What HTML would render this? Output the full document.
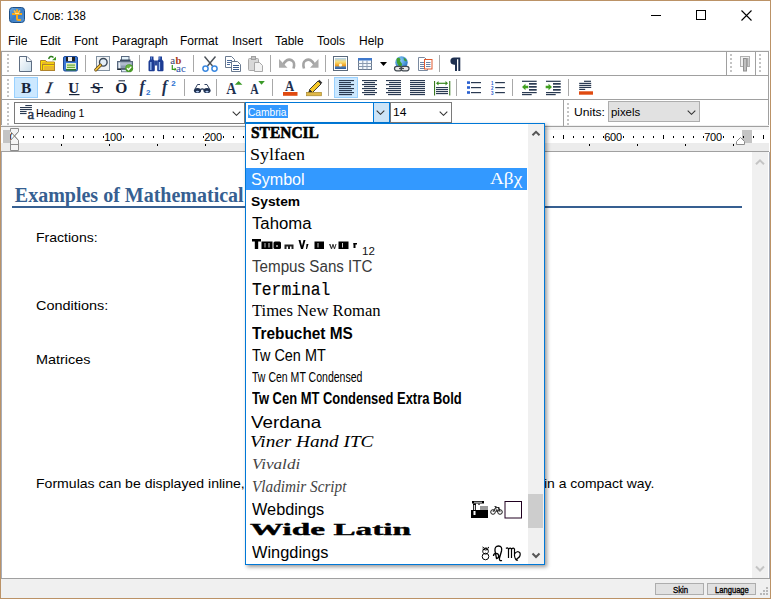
<!DOCTYPE html>
<html><head><meta charset="utf-8">
<style>
*{margin:0;padding:0;box-sizing:border-box}
html,body{width:771px;height:599px;overflow:hidden;background:#fff}
body{position:relative;font-family:"Liberation Sans",sans-serif;font-size:12px;color:#000}
.a{position:absolute}
#frame{left:0;top:0;width:771px;height:599px;border:1px solid #bb9266;z-index:50;pointer-events:none}
.menu span{position:absolute;top:34px;font-size:12px;white-space:nowrap}
.grip{position:absolute;width:2px;background-image:linear-gradient(#c4c4c4 50%,transparent 50%);background-size:2px 4px}
.sep{position:absolute;width:1px;height:17px;background:#a8a8a8}
.ic{position:absolute;width:16px;height:16px}
.li{position:absolute;left:251px;white-space:nowrap;line-height:1;transform-origin:0 0}
.doc{position:absolute;left:36px;font-size:13px;line-height:1;white-space:nowrap;color:#000;transform-origin:0 0}
.tick{position:absolute;width:1px;background:#000}
.rn{position:absolute;top:132px;width:40px;text-align:center;font-size:11px;line-height:1;white-space:nowrap;letter-spacing:-0.3px}
</style></head><body>
<div id="frame" class="a"></div>

<!-- title bar -->
<svg class="a" style="left:9px;top:7px" width="16" height="16" viewBox="0 0 16 16">
<defs><linearGradient id="gApp" x1="0" y1="0" x2="1" y2="1"><stop offset="0" stop-color="#6aa8e0"/><stop offset="0.5" stop-color="#3a7cc4"/><stop offset="1" stop-color="#5a9ad8"/></linearGradient></defs>
<rect x="0.5" y="0.5" width="15" height="15" rx="3" fill="url(#gApp)" stroke="#1d4f86"/>
<path d="M3 7H13" stroke="#f8a818" stroke-width="2"/>
<path d="M8 2.3V11.8Q8 13 9.5 13H12" fill="none" stroke="#f8a818" stroke-width="2"/>
<path d="M5 3.5L6.8 6M11 3.5L9.2 6" stroke="#ffc040" stroke-width="1.6"/>
<path d="M6 6.5L10 6.5" stroke="#ffe08a" stroke-width="1"/>
</svg>
<div class="a" style="left:33.3px;top:10px;font-size:12px;line-height:1;transform:scaleX(0.95);transform-origin:0 0;white-space:nowrap">Слов: 138</div>
<div class="a" style="left:651px;top:15px;width:10px;height:1px;background:#000"></div>
<div class="a" style="left:696px;top:10px;width:10px;height:10px;border:1px solid #000"></div>
<svg class="a" style="left:741px;top:10px" width="11" height="11"><path d="M0.5 0.5L10.5 10.5M10.5 0.5L0.5 10.5" stroke="#000" stroke-width="1.1"/></svg>

<!-- menu -->
<div class="menu">
<span style="left:8px">File</span>
<span style="left:40px">Edit</span>
<span style="left:74px">Font</span>
<span style="left:112px">Paragraph</span>
<span style="left:180px">Format</span>
<span style="left:232px">Insert</span>
<span style="left:275px">Table</span>
<span style="left:317px">Tools</span>
<span style="left:359px">Help</span>
</div>

<!-- toolbar area -->
<div class="a" style="left:1px;top:50px;width:769px;height:1px;background:#f0f0f0"></div>
<div class="a" style="left:1px;top:51px;width:768px;height:76px;border:1px solid #a0a0a0;border-bottom:none"></div>
<div class="a" style="left:1px;top:75px;width:768px;height:1px;background:#a0a0a0"></div>
<div class="a" style="left:1px;top:99px;width:768px;height:1px;background:#a0a0a0"></div>
<div class="a" style="left:1px;top:125px;width:768px;height:1px;background:#f0f0f0"></div><div class="a" style="left:1px;top:126px;width:768px;height:1px;background:#a0a0a0"></div>
<div class="a" style="left:726px;top:52px;width:1px;height:23px;background:#a0a0a0"></div>
<div class="a" style="left:755px;top:52px;width:1px;height:23px;background:#a0a0a0"></div>
<div class="a" style="left:563px;top:100px;width:1px;height:26px;background:#a0a0a0"></div>
<div class="grip" style="left:7px;top:54px;height:18px"></div>
<div class="grip" style="left:7px;top:79px;height:18px"></div>
<div class="grip" style="left:7px;top:103px;height:22px"></div>
<div class="grip" style="left:730px;top:54px;height:18px"></div>
<div class="grip" style="left:759px;top:54px;height:18px"></div>
<div class="grip" style="left:567px;top:103px;height:22px"></div>

<!-- toolbar 1 separators -->
<div class="sep" style="left:85px;top:55px"></div>
<div class="sep" style="left:139px;top:55px"></div>
<div class="sep" style="left:193px;top:55px"></div>
<div class="sep" style="left:270px;top:55px"></div>
<div class="sep" style="left:325px;top:55px"></div>
<div class="sep" style="left:439px;top:55px"></div>
<!-- toolbar 2 separators -->
<div class="sep" style="left:184px;top:79px"></div>
<div class="sep" style="left:216px;top:79px"></div>
<div class="sep" style="left:272px;top:79px"></div>
<div class="sep" style="left:328px;top:79px"></div>
<div class="sep" style="left:456px;top:79px"></div>
<div class="sep" style="left:512px;top:79px"></div>
<div class="sep" style="left:568px;top:79px"></div>

<svg class="a" style="left:0;top:0" width="771" height="126" viewBox="0 0 771 126">
<defs>
<linearGradient id="gNew" x1="0" y1="0" x2="1" y2="1"><stop offset="0" stop-color="#ffffff"/><stop offset="1" stop-color="#c8dcea"/></linearGradient>
<linearGradient id="gImg" x1="0" y1="0" x2="0" y2="1"><stop offset="0" stop-color="#b0d0f0"/><stop offset="0.35" stop-color="#f8e078"/><stop offset="0.72" stop-color="#f09818"/><stop offset="0.8" stop-color="#5080b8"/><stop offset="1" stop-color="#2a5898"/></linearGradient>
<radialGradient id="gGlobe" cx="0.4" cy="0.35" r="0.7"><stop offset="0" stop-color="#8fd0ff"/><stop offset="1" stop-color="#1f70c0"/></radialGradient>
<linearGradient id="gFold" x1="0" y1="0" x2="0" y2="1"><stop offset="0" stop-color="#ffe066"/><stop offset="1" stop-color="#e8b020"/></linearGradient>
</defs>
<!-- New -->
<path d="M19.5 56.5H27L31.5 61V71.5H19.5Z" fill="url(#gNew)" stroke="#5d6d82"/>
<path d="M26.5 56.5V61.5H31.5" fill="#fff" stroke="#5d6d82"/>
<!-- Open -->
<path d="M40.5 60.5H45.5L47 62H54.5V70.5H40.5Z" fill="#e8b828" stroke="#b0842c"/>
<path d="M41.5 61.5V69.5M41.5 61.5H45M46.5 63H54" fill="none" stroke="#ffe200" stroke-width="1"/>
<rect x="42.5" y="64.5" width="12" height="6" fill="#e8b830" stroke="#b0842c"/>
<path d="M43.5 70V65.5H54" fill="none" stroke="#ffe000" stroke-width="1"/>
<path d="M48.6 58.8Q50.5 55 53.5 57.5" fill="none" stroke="#2a7a1a" stroke-width="1.5"/>
<path d="M52 60.3H56V56.8Z" fill="#3a9a20"/>
<!-- Save -->
<rect x="63.5" y="56.5" width="14" height="14.5" rx="1.5" fill="#3d7ad8" stroke="#1c4a98"/>
<rect x="66" y="57" width="9" height="4.5" fill="#202020"/>
<rect x="68" y="57" width="4" height="4" fill="#f0f0f0"/>
<rect x="66" y="63" width="10" height="7" fill="#e4f2cc"/>
<rect x="67" y="64.5" width="8" height="1.2" fill="#6aac38"/>
<rect x="67" y="66.8" width="8" height="1.2" fill="#6aac38"/>
<rect x="66" y="69" width="10" height="1.5" fill="#2f7a20"/>
<!-- sep -->
<!-- Preview -->
<rect x="96.5" y="56.5" width="13" height="14" fill="#f0f2f4" stroke="#8090a0"/>
<circle cx="103.3" cy="62.3" r="3.8" fill="#e4eef6" stroke="#3a4858" stroke-width="1.4"/>
<path d="M100.5 65.2L95.8 69.8" stroke="#5a4010" stroke-width="3.2" stroke-linecap="round"/>
<path d="M100.5 65.2L95.8 69.8" stroke="#f4c440" stroke-width="1.7" stroke-linecap="round"/>
<!-- Print -->
<rect x="121.5" y="56.5" width="7.5" height="5" fill="#e4f2fa" stroke="#5a6a80"/>
<rect x="120" y="59.5" width="10.5" height="2" fill="#3a4a60"/>
<rect x="117.5" y="61.5" width="15" height="8" fill="#8a9ab0" stroke="#5a6a80"/>
<rect x="118.5" y="62.5" width="2" height="6" fill="#e8eef4"/>
<rect x="120.5" y="62.5" width="11" height="3" fill="#b0bccc"/>
<rect x="117.5" y="68.5" width="9" height="1.5" fill="#202830"/>
<rect x="121.5" y="69.5" width="9" height="2.3" fill="#e4f2fa" stroke="#5a6a80" stroke-width="0.8"/>
<circle cx="129.2" cy="68.2" r="3.9" fill="#4a9a28"/>
<circle cx="128.6" cy="67.4" r="2.4" fill="#6ab840"/>
<path d="M127 68.2L128.6 69.8L131.4 66.6" fill="none" stroke="#fff" stroke-width="1.3"/>
<!-- Binoculars -->
<path d="M150 56.5H153.5V59.5L154.8 61V70.3Q154.8 71.3 153.8 71.3H149.5Q148.5 71.3 148.5 70.3V61.5L150 59.5Z" fill="#1c3c94"/>
<path d="M158.5 56.5H162V59.5L163.5 61.5V70.3Q163.5 71.3 162.5 71.3H158.2Q157.2 71.3 157.2 70.3V61L158.5 59.5Z" fill="#1c3c94"/>
<rect x="154.5" y="60.5" width="3" height="5" fill="#2a4a9a"/>
<rect x="150.2" y="62" width="1.3" height="8" fill="#9ac0f4"/>
<rect x="158.8" y="62" width="1.3" height="8" fill="#9ac0f4"/>
<rect x="150.8" y="57" width="1" height="2.5" fill="#6a98e0"/>
<rect x="159.3" y="57" width="1" height="2.5" fill="#6a98e0"/>
<!-- Replace -->
<text x="170.3" y="63.5" font-family="Liberation Serif" font-size="11" fill="#3a4470">a</text>
<text x="175.6" y="63.5" font-family="Liberation Serif" font-size="10.5" font-weight="bold" fill="#a83818">b</text>
<text x="176" y="71.5" font-family="Liberation Serif" font-size="11" fill="#2850a8">ac</text>
<path d="M172.3 65V69.3H175.5" fill="none" stroke="#3a9a20" stroke-width="1.2"/>
<path d="M174.6 67.6L176.6 69.3L174.6 71Z" fill="#3a9a20"/>
<!-- Scissors -->
<path d="M204.5 56.5L212.5 66" stroke="#4a5058" stroke-width="1.4"/>
<path d="M215.5 56.5L207.5 66" stroke="#4a5058" stroke-width="1.4"/>
<circle cx="205.5" cy="68.6" r="2.6" fill="none" stroke="#3a88e0" stroke-width="1.5"/>
<circle cx="214.5" cy="68.6" r="2.6" fill="none" stroke="#3a88e0" stroke-width="1.5"/>
<!-- Copy -->
<path d="M225.5 56.5H231.5L234.5 59.5V67.5H225.5Z" fill="#fff" stroke="#6a7a90"/>
<path d="M227 60.5H232M227 62.5H232M227 64.5H230" stroke="#4a6a9a"/>
<path d="M231.5 61.5H237.5L240.5 64.5V71.5H231.5Z" fill="#fff" stroke="#6a7a90"/>
<path d="M233 65.5H239M233 67.5H239M233 69.5H239" stroke="#3a5a8a"/>
<!-- Paste (disabled) -->
<rect x="248.5" y="58.5" width="10" height="12" rx="1" fill="#d8d8d8" stroke="#a8a8a8"/>
<rect x="251.5" y="56.5" width="4" height="3" fill="#c4c4c4" stroke="#a0a0a0"/>
<path d="M254.5 62.5H259.5L262.5 65.5V71.5H254.5Z" fill="#f2f2f2" stroke="#a8a8a8"/>
<!-- Undo -->
<path d="M282.5 65.5Q286.5 57.5 292 60.5Q295.3 62.5 293.5 68.5" fill="none" stroke="#a4a4a4" stroke-width="2.6"/>
<path d="M279 59V67.8H287.5Z" fill="#acacac"/>
<!-- Redo -->
<path d="M315 65.5Q311 57.5 305.5 60.5Q302.2 62.5 304 68.5" fill="none" stroke="#a4a4a4" stroke-width="2.6"/>
<path d="M318.5 59V67.8H310Z" fill="#acacac"/>
<!-- Image -->
<rect x="333.5" y="56.5" width="14" height="14" fill="#fff" stroke="#5a6a7c"/>
<rect x="335" y="58" width="11" height="11" fill="url(#gImg)"/>
<circle cx="340.5" cy="65" r="1.6" fill="#fffce0"/>
<!-- Table -->
<rect x="358.5" y="58.5" width="13" height="11" fill="#f4f8fc" stroke="#6a7a90"/>
<rect x="358" y="58" width="14" height="2.5" fill="#3f78cc"/>
<path d="M362.8 60.5V69.5M367 60.5V69.5M358.5 63.5H371.5M358.5 66.5H371.5" stroke="#8a9ab0" stroke-width="1"/>
<!-- dropdown -->
<path d="M380 62H387L383.5 66Z" fill="#000"/>
<!-- Globe link -->
<circle cx="401.5" cy="62.5" r="6.2" fill="url(#gGlobe)"/>
<path d="M397 58Q399 57 400.5 59Q399.5 61 401 62.5Q403 64 401 67Q398 66 397 63Q396 60 397 58Z" fill="#40a030"/>
<path d="M403.5 57.5Q406 58.5 407 61Q405 62 404 60Z" fill="#40a030"/>
<rect x="394.5" y="66.3" width="7.5" height="4.5" rx="2.2" fill="#e8e8e8" stroke="#404850" stroke-width="1.2"/>
<rect x="401" y="66.3" width="8" height="4.5" rx="2.2" fill="#e8e8e8" stroke="#404850" stroke-width="1.2"/><path d="M399 68.5H404" stroke="#404850" stroke-width="1.2"/>
<!-- Page copy -->
<path d="M418.5 57.5H424.5L427.5 60.5V70.5H418.5Z" fill="#fff" stroke="#7a8aa0"/>
<path d="M420 62.5H425M420 64.5H425M420 66.5H425M420 68.5H425" stroke="#6a84a8"/>
<rect x="424.5" y="59.5" width="7.5" height="9.5" fill="#fff" stroke="#e05a30"/>
<path d="M426 62.5H430.5M426 64.5H430.5M426 66.5H430.5" stroke="#6a84a8"/>
<!-- Pilcrow -->
<path d="M460.3 57.5H454A3.6 3.6 0 0 0 454 64.7H455V71H457V59.3H458.3V71H460.3Z" fill="#1e3050"/>
<!-- right mini icon -->
<rect x="740.5" y="56.5" width="9" height="10" fill="#f0f0f0" stroke="#b0b0b0"/>
<rect x="743.5" y="58.5" width="3" height="12.5" fill="#c0c0c0" stroke="#909090"/>
<rect x="746.5" y="58" width="2" height="9" fill="#a8a8a8"/>
</svg>

<svg class="a" style="left:0;top:0" width="771" height="126" viewBox="0 0 771 126">
<!-- B highlight -->
<rect x="14.5" y="77.5" width="23" height="20" fill="#cce8ff" stroke="#99d1ff"/>
<text x="21" y="92.8" font-family="Liberation Serif" font-weight="bold" font-size="15.5" fill="#16233a">B</text>
<text x="45.5" y="92.8" font-family="Liberation Serif" font-style="italic" font-size="16" fill="#16233a" stroke="#16233a" stroke-width="0.3" transform="translate(45 92.8) skewX(-10) translate(-45 -92.8)">I</text>
<text x="68.3" y="92.8" font-family="Liberation Serif" font-weight="bold" font-size="15" fill="#16233a">U</text>
<rect x="69" y="94" width="10.5" height="1.2" fill="#16233a"/>
<text x="92" y="92.8" font-family="Liberation Serif" font-weight="bold" font-size="15" fill="#16233a">S</text>
<rect x="90.5" y="87" width="12.5" height="1.2" fill="#16233a"/>
<text x="115.2" y="93.2" font-family="Liberation Serif" font-weight="bold" font-size="15.5" fill="#16233a">O</text>
<rect x="118.5" y="80.3" width="6.5" height="1" fill="#16233a"/>
<!-- f2 -->
<text x="139.5" y="92" font-family="Liberation Serif" font-style="italic" font-weight="bold" font-size="16" fill="#1e3050">f</text>
<text x="146" y="94.7" font-family="Liberation Sans" font-weight="bold" font-size="8" fill="#2a70d0">2</text>
<text x="162" y="92" font-family="Liberation Serif" font-style="italic" font-weight="bold" font-size="16" fill="#1e3050">f</text>
<text x="171.2" y="86.3" font-family="Liberation Sans" font-weight="bold" font-size="8" fill="#2a70d0">2</text>
<!-- glasses -->
<path d="M195 89L197.5 84.5H200M209.5 89L207 84.5H204.5" fill="none" stroke="#1e3050" stroke-width="0.9"/>
<path d="M200.5 89.5Q202.3 88.3 204 89.5" fill="none" stroke="#1e3050" stroke-width="1.2"/>
<ellipse cx="197.5" cy="90.5" rx="3.6" ry="2.6" fill="#1e3050"/>
<ellipse cx="207" cy="90.5" rx="3.6" ry="2.6" fill="#1e3050"/>
<ellipse cx="197.5" cy="91.6" rx="1.6" ry="0.9" fill="#b0c8f0"/>
<ellipse cx="207" cy="91.6" rx="1.6" ry="0.9" fill="#b0c8f0"/>
<!-- A grow -->
<text font-family="Liberation Serif" font-weight="bold" font-size="17" fill="#1e3050" transform="translate(226.3 94.3) scale(0.82 1)">A</text>
<path d="M234.8 84.8L238.6 81L242.4 84.8Z" fill="#3a9a28"/>
<text font-family="Liberation Serif" font-weight="bold" font-size="14.5" fill="#1e3050" transform="translate(250.3 94.3) scale(0.8 1)">A</text>
<path d="M258.3 81H264.8L261.5 84.7Z" fill="#3a9a28"/>
<!-- A red -->
<text font-family="Liberation Serif" font-weight="bold" font-size="15" fill="#1e3050" transform="translate(285 90.8) scale(0.85 1)">A</text>
<rect x="283" y="92" width="14.5" height="3.8" fill="#e04a10"/>
<!-- highlighter -->
<path d="M309.5 89.5L318 81L321 84L312.5 92.5Z" fill="#f6c828" stroke="#2a2a2a" stroke-width="0.9"/>
<path d="M318 81L319.3 79.7L322.3 82.7L321 84Z" fill="#333"/>
<path d="M309.5 89.5L307.8 93.2L312.5 92.5Z" fill="#2a2a2a"/>
<rect x="306.5" y="92.3" width="15" height="3.5" fill="#e0b848" stroke="#a08028" stroke-width="0.6"/>
<!-- align left highlight -->
<rect x="334.5" y="77.5" width="23" height="20" fill="#cce8ff" stroke="#99d1ff"/>
<g fill="#2a3a52">
<rect x="339" y="80" width="15" height="1.15"/><rect x="339" y="82" width="12" height="1.15"/>
<rect x="339" y="84" width="15" height="1.15"/><rect x="339" y="86" width="12" height="1.15"/>
<rect x="339" y="88" width="15" height="1.15"/><rect x="339" y="90" width="13" height="1.15"/>
<rect x="339" y="92" width="15" height="1.15"/><rect x="339" y="94" width="13" height="1.15"/>
<!-- center -->
<rect x="362" y="80" width="15" height="1.15"/><rect x="364" y="82" width="11" height="1.15"/>
<rect x="362" y="84" width="15" height="1.15"/><rect x="364" y="86" width="11" height="1.15"/>
<rect x="362" y="88" width="15" height="1.15"/><rect x="364" y="90" width="11" height="1.15"/>
<rect x="362" y="92" width="15" height="1.15"/><rect x="364" y="94" width="11" height="1.15"/>
<!-- right -->
<rect x="386" y="80" width="15" height="1.15"/><rect x="389" y="82" width="12" height="1.15"/>
<rect x="386" y="84" width="15" height="1.15"/><rect x="389" y="86" width="12" height="1.15"/>
<rect x="386" y="88" width="15" height="1.15"/><rect x="388" y="90" width="13" height="1.15"/>
<rect x="386" y="92" width="15" height="1.15"/><rect x="388" y="94" width="13" height="1.15"/>
<!-- justify -->
<rect x="410" y="80" width="15" height="1.15"/><rect x="410" y="82" width="15" height="1.15"/>
<rect x="410" y="84" width="15" height="1.15"/><rect x="410" y="86" width="15" height="1.15"/>
<rect x="410" y="88" width="15" height="1.15"/><rect x="410" y="90" width="15" height="1.15"/>
<rect x="410" y="92" width="15" height="1.15"/><rect x="410" y="94" width="15" height="1.15"/>
<!-- distribute lines -->
<rect x="436" y="87" width="12" height="1.15"/><rect x="436" y="89" width="12" height="1.15"/>
<rect x="436" y="91" width="12" height="1.15"/><rect x="436" y="93" width="12" height="1.15"/>
</g>
<rect x="434" y="81" width="1.1" height="14.5" fill="#3a7a20"/>
<rect x="449.2" y="81" width="1.1" height="14.5" fill="#3a7a20"/>
<path d="M437 83.3H447" stroke="#3a8a20" stroke-width="1.2"/>
<path d="M436 83.3L438.5 81V85.6Z M448 83.3L445.5 81V85.6Z" fill="#3a8a20"/>
<!-- bullets -->
<g fill="#2a60d0"><rect x="467" y="81.3" width="3" height="2.6"/><rect x="467" y="86.2" width="3" height="2.6"/><rect x="467" y="91.2" width="3" height="2.6"/></g>
<g fill="#2a3a52"><rect x="471" y="82" width="10" height="1.2"/><rect x="471" y="87" width="10" height="1.2"/><rect x="471" y="92" width="10" height="1.2"/>
<rect x="495.2" y="82" width="9.7" height="1.2"/><rect x="495.2" y="87" width="9.7" height="1.2"/><rect x="495.2" y="92" width="9.7" height="1.2"/></g>
<text x="491" y="84.5" font-family="Liberation Sans" font-weight="bold" font-size="4.5" fill="#2a60d0">1</text>
<text x="491" y="89.5" font-family="Liberation Sans" font-weight="bold" font-size="4.5" fill="#2a60d0">2</text>
<text x="491" y="94.5" font-family="Liberation Sans" font-weight="bold" font-size="4.5" fill="#2a60d0">3</text>
<!-- outdent -->
<g fill="#2a3a52">
<rect x="522" y="80.7" width="14.7" height="1.2"/>
<rect x="529" y="83" width="7.7" height="1.7"/><rect x="529" y="86" width="7.7" height="1.7"/><rect x="529" y="89" width="7.7" height="1.7"/>
<rect x="522" y="92" width="14.7" height="1.2"/><rect x="522" y="94" width="9.7" height="1.2"/>
<rect x="546" y="80.7" width="14.7" height="1.2"/>
<rect x="553" y="83" width="7.7" height="1.7"/><rect x="553" y="86" width="7.7" height="1.7"/><rect x="553" y="89" width="7.7" height="1.7"/>
<rect x="546" y="92" width="14.7" height="1.2"/><rect x="546" y="94" width="9.7" height="1.2"/>
</g>
<path d="M522 87L525.5 83.8V85.8H528.3V88.2H525.5V90.2Z" fill="#40a020"/>
<path d="M552 87L548.5 83.8V85.8H545.7V88.2H548.5V90.2Z" fill="#40a020"/>
<!-- last -->
<g fill="#2a3a52">
<rect x="584" y="80.7" width="7" height="1.2"/><rect x="579.2" y="82.8" width="12" height="1.2"/>
<rect x="579.2" y="84.8" width="12" height="1.2"/><rect x="579.2" y="86.8" width="12" height="1.2"/>
<rect x="579.2" y="88.8" width="6" height="1.2"/>
</g>
<rect x="579" y="91.3" width="14" height="3.4" fill="#e04a10"/>
</svg>


<!-- style bar -->
<div class="a" style="left:14px;top:102px;width:231px;height:22px;border:1px solid #7a7a7a;background:#fff"></div>
<svg class="a" style="left:0;top:100px" width="40" height="24"><g fill="#2a3a52"><rect x="25.3" y="5" width="6.6" height="1.1"/><rect x="20" y="7" width="11.9" height="1.1"/><rect x="20" y="9" width="11.9" height="1.1"/><rect x="20" y="11" width="6.6" height="1.1"/><rect x="20" y="13" width="6.6" height="1.1"/></g><text x="27.6" y="18.6" font-family="Liberation Serif" font-size="15" fill="#2a3a52" stroke="#2a3a52" stroke-width="0.5">a</text></svg>
<div class="a" style="left:36px;top:108px;font-size:11px;line-height:1;white-space:nowrap;transform:scaleX(0.965);transform-origin:0 0">Heading 1</div>
<svg class="a" style="left:232px;top:111px" width="9" height="5"><path d="M0.7 0.7L4.5 4.3L8.3 0.7" stroke="#333" stroke-width="1.1" fill="none"/></svg>
<div class="a" style="left:390px;top:102px;width:62px;height:21px;border:1px solid #7a7a7a;background:#fff"></div>
<div class="a" style="left:392.6px;top:106.7px;font-size:11px;line-height:1;transform:scaleX(1.1);transform-origin:0 0">14</div>
<svg class="a" style="left:439px;top:111px" width="9" height="5"><path d="M0.7 0.7L4.5 4.3L8.3 0.7" stroke="#333" stroke-width="1.1" fill="none"/></svg>
<div class="a" style="left:573.6px;top:106.8px;font-size:11px;line-height:1;transform:scaleX(1.1);transform-origin:0 0;white-space:nowrap">Units:</div>
<div class="a" style="left:608px;top:101px;width:92px;height:21px;border:1px solid #adadad;background:#e1e1e1"></div>
<div class="a" style="left:610.5px;top:106.8px;font-size:11px;line-height:1;transform:scaleX(1.04);transform-origin:0 0">pixels</div>
<svg class="a" style="left:687px;top:110px" width="9" height="5"><path d="M0.7 0.7L4.5 4.3L8.3 0.7" stroke="#333" stroke-width="1.1" fill="none"/></svg>

<!-- ruler -->
<div class="a" style="left:1px;top:127px;width:768px;height:24px;background:#ececec"></div>
<div class="a" style="left:1px;top:127px;width:768px;height:3px;background:#f3f3f3"></div>
<div class="a" style="left:1px;top:130px;width:768px;height:13px;background:#fff"></div>
<div class="a" style="left:1px;top:151px;width:768px;height:1px;background:#a0a0a0"></div>
<div class="a" style="left:3px;top:130px;width:7px;height:13px;background:#c4c4c4"></div>
<div class="a" style="left:742px;top:130px;width:10px;height:13px;background:#c4c4c4"></div>
<svg class="a" style="left:0;top:0" width="771" height="152"><g fill="#000"><rect x="23" y="136" width="1" height="2"/><rect x="33" y="136" width="1" height="2"/><rect x="43" y="136" width="1" height="2"/><rect x="53" y="136" width="1" height="2"/><rect x="63" y="135" width="1" height="4"/><rect x="73" y="136" width="1" height="2"/><rect x="83" y="136" width="1" height="2"/><rect x="93" y="136" width="1" height="2"/><rect x="103" y="136" width="1" height="2"/><rect x="123" y="136" width="1" height="2"/><rect x="133" y="136" width="1" height="2"/><rect x="143" y="136" width="1" height="2"/><rect x="153" y="136" width="1" height="2"/><rect x="163" y="135" width="1" height="4"/><rect x="173" y="136" width="1" height="2"/><rect x="183" y="136" width="1" height="2"/><rect x="193" y="136" width="1" height="2"/><rect x="203" y="136" width="1" height="2"/><rect x="223" y="136" width="1" height="2"/><rect x="233" y="136" width="1" height="2"/><rect x="243" y="136" width="1" height="2"/><rect x="253" y="136" width="1" height="2"/><rect x="263" y="135" width="1" height="4"/><rect x="273" y="136" width="1" height="2"/><rect x="283" y="136" width="1" height="2"/><rect x="293" y="136" width="1" height="2"/><rect x="303" y="136" width="1" height="2"/><rect x="323" y="136" width="1" height="2"/><rect x="333" y="136" width="1" height="2"/><rect x="343" y="136" width="1" height="2"/><rect x="353" y="136" width="1" height="2"/><rect x="363" y="135" width="1" height="4"/><rect x="373" y="136" width="1" height="2"/><rect x="383" y="136" width="1" height="2"/><rect x="393" y="136" width="1" height="2"/><rect x="403" y="136" width="1" height="2"/><rect x="423" y="136" width="1" height="2"/><rect x="433" y="136" width="1" height="2"/><rect x="443" y="136" width="1" height="2"/><rect x="453" y="136" width="1" height="2"/><rect x="463" y="135" width="1" height="4"/><rect x="473" y="136" width="1" height="2"/><rect x="483" y="136" width="1" height="2"/><rect x="493" y="136" width="1" height="2"/><rect x="503" y="136" width="1" height="2"/><rect x="523" y="136" width="1" height="2"/><rect x="533" y="136" width="1" height="2"/><rect x="543" y="136" width="1" height="2"/><rect x="553" y="136" width="1" height="2"/><rect x="563" y="135" width="1" height="4"/><rect x="573" y="136" width="1" height="2"/><rect x="583" y="136" width="1" height="2"/><rect x="593" y="136" width="1" height="2"/><rect x="603" y="136" width="1" height="2"/><rect x="623" y="136" width="1" height="2"/><rect x="633" y="136" width="1" height="2"/><rect x="643" y="136" width="1" height="2"/><rect x="653" y="136" width="1" height="2"/><rect x="663" y="135" width="1" height="4"/><rect x="673" y="136" width="1" height="2"/><rect x="683" y="136" width="1" height="2"/><rect x="693" y="136" width="1" height="2"/><rect x="703" y="136" width="1" height="2"/><rect x="723" y="136" width="1" height="2"/><rect x="733" y="136" width="1" height="2"/><rect x="743" y="136" width="1" height="2"/><rect x="753" y="136" width="1" height="2"/><rect x="763" y="135" width="1" height="4"/><rect x="61" y="144" width="1" height="2"/><rect x="109" y="144" width="1" height="2"/><rect x="157" y="144" width="1" height="2"/><rect x="205" y="144" width="1" height="2"/><rect x="253" y="144" width="1" height="2"/><rect x="301" y="144" width="1" height="2"/><rect x="349" y="144" width="1" height="2"/><rect x="397" y="144" width="1" height="2"/><rect x="445" y="144" width="1" height="2"/><rect x="493" y="144" width="1" height="2"/><rect x="541" y="144" width="1" height="2"/><rect x="589" y="144" width="1" height="2"/><rect x="637" y="144" width="1" height="2"/><rect x="685" y="144" width="1" height="2"/><rect x="733" y="144" width="1" height="2"/></g></svg>
<div class="rn" style="left:93px">100</div><div class="rn" style="left:193px">200</div><div class="rn" style="left:293px">300</div><div class="rn" style="left:393px">400</div><div class="rn" style="left:493px">500</div><div class="rn" style="left:593px">600</div><div class="rn" style="left:693px">700</div>
<div class="a" style="left:10px;top:132px;width:4.5px;height:12px;overflow:hidden;font-size:11px;line-height:1"><span style="position:absolute;left:-0.5px;top:0">0</span></div>
<svg class="a" style="left:0;top:0" width="771" height="152">
<path d="M10.5 128.5H18.5V131.5L14.5 136L10.5 131.5Z" fill="#f4f4f4" stroke="#8c8c8c"/>
<path d="M10.5 150.5H18.5V140.5L14.5 136L10.5 140.5Z" fill="#f4f4f4" stroke="#8c8c8c"/>
<path d="M18.5 131.5L14.5 136L18.5 140.5" fill="none" stroke="#8c8c8c"/>
<path d="M10.5 144.5H18.5" stroke="#8c8c8c"/>
<path d="M736.5 141.5L740.5 137.5L744.5 141.5V144.5H736.5Z" fill="#fff" stroke="#8c8c8c"/>
</svg>
<!-- RULER -->

<!-- doc -->
<div class="a" style="left:1px;top:152px;width:1px;height:426px;background:#a8adb8"></div>
<div class="a" style="left:752px;top:152px;width:16px;height:426px;background:#f0f0f0"></div><div class="a" style="left:769px;top:152px;width:1px;height:426px;background:#a8adb8"></div>
<svg class="a" style="left:755px;top:158px" width="10" height="8"><path d="M1 6.3L5 2.3L9 6.3" stroke="#c4c4c4" stroke-width="2" fill="none"/></svg>
<svg class="a" style="left:755px;top:565px" width="10" height="8"><path d="M1 1.5L5 5.5L9 1.5" stroke="#c4c4c4" stroke-width="2" fill="none"/></svg>
<div class="a" style="left:14.8px;top:184.8px;line-height:1;font-family:'Liberation Serif',serif;font-weight:bold;font-size:20px;color:#365f91;white-space:nowrap">Examples of Mathematical</div>
<div class="a" style="left:12px;top:206px;width:730px;height:2px;background:#365f91"></div>
<div class="doc" style="top:230.7px;left:36.2px;transform:scaleX(1.08)">Fractions:</div>
<div class="doc" style="top:298.5px;left:36.2px;transform:scaleX(1.11)">Conditions:</div>
<div class="doc" style="top:353px;left:36px;transform:scaleX(1.11)">Matrices</div>
<div class="doc" style="top:476.5px;left:36px;transform:scaleX(1.082)">Formulas can be displayed inline,</div>
<div class="doc" style="top:476.5px;left:544.1px;transform:scaleX(1.07)">in a compact way.</div>

<!-- status bar -->
<div class="a" style="left:1px;top:578px;width:769px;height:1px;background:#a0a0a0"></div>
<div class="a" style="left:1px;top:579px;width:769px;height:19px;background:#f0f0f0"></div>
<div class="a" style="left:655px;top:583px;width:49px;height:12px;border:1px solid #adadad;background:#e1e1e1"></div>
<div class="a" style="left:707px;top:583px;width:49px;height:12px;border:1px solid #adadad;background:#e1e1e1"></div>
<div class="a" style="left:672.5px;top:584.5px;font-size:9.5px;line-height:1;transform:scaleX(0.82);transform-origin:0 0;white-space:nowrap;color:#000;-webkit-text-stroke:0.35px #000">Skin</div>
<div class="a" style="left:714.5px;top:584.5px;font-size:9.5px;line-height:1;transform:scaleX(0.8);transform-origin:0 0;white-space:nowrap;color:#000;-webkit-text-stroke:0.35px #000">Language</div>
<svg class="a" style="left:757px;top:584px" width="14" height="14"><g fill="#b8b8b8"><rect x="9" y="3" width="2" height="2"/><rect x="6" y="6" width="2" height="2"/><rect x="9" y="6" width="2" height="2"/><rect x="3" y="9" width="2" height="2"/><rect x="6" y="9" width="2" height="2"/><rect x="9" y="9" width="2" height="2"/></g></svg>


<!-- font combo + dropdown -->
<div class="a" style="left:245px;top:102px;width:145px;height:21px;border:1px solid #0078d7;background:#fff"></div>
<div class="a" style="left:373px;top:103px;width:16px;height:19px;background:#cce4f7;border-left:1px solid #0078d7"></div>
<svg class="a" style="left:376px;top:110px" width="9" height="5"><path d="M0.7 0.7L4.5 4.3L8.3 0.7" stroke="#333" stroke-width="1.1" fill="none"/></svg>
<div class="a" style="left:248px;top:105px;width:40px;height:13px;background:#3399ff"></div>
<div class="a" style="left:247.8px;top:106.8px;font-size:11px;line-height:1;color:#fff;transform:scaleX(0.925);transform-origin:0 0">Cambria</div>

<div class="a" style="left:245px;top:123px;width:300px;height:442px;border:1px solid #0078d7;background:#fff;box-shadow:2px 2px 4px rgba(0,0,0,0.4)"></div>
<div class="a" style="left:528px;top:124px;width:16px;height:440px;background:#f0f0f0"></div>
<div class="a" style="left:528px;top:494px;width:15px;height:34px;background:#cdcdcd"></div>
<svg class="a" style="left:531px;top:129px" width="10" height="8"><path d="M1.5 6.3L5 2.8L8.5 6.3" stroke="#555" stroke-width="2" fill="none"/></svg>
<svg class="a" style="left:531px;top:552px" width="10" height="8"><path d="M1.5 1.5L5 5L8.5 1.5" stroke="#555" stroke-width="2" fill="none"/></svg>
<div class="a" style="left:246px;top:168px;width:281px;height:22px;background:#3399ff"></div>
<div class="li" style="left:250.8px;top:124.4px;font-family:'Liberation Serif';font-size:17px;font-weight:bold;transform:scaleX(0.91);-webkit-text-stroke:0.6px #000;">STENCIL</div>
<div class="li" style="left:250.3px;top:146.2px;font-family:'Liberation Serif';font-size:17px;transform:scaleX(1.059);">Sylfaen</div>
<div class="li" style="left:250.7px;top:171.7px;font-family:'Liberation Sans';font-size:16px;transform:scaleX(1.005);color:#fff;">Symbol</div>
<div class="li" style="left:250.6px;top:196.4px;font-family:'Liberation Sans';font-size:12px;font-weight:bold;transform:scaleX(1.15);">System</div>
<div class="li" style="left:251.6px;top:216.2px;font-family:'Liberation Sans';font-size:16px;transform:scaleX(1.045);">Tahoma</div>
<div class="li" style="left:252.0px;top:259.4px;font-family:'Liberation Sans';font-size:16px;transform:scaleX(0.948);color:#3a3a3a">Tempus Sans ITC</div>
<div class="li" style="left:251.5px;top:281px;font-family:'Liberation Mono';font-size:16px;transform:scale(1.02,1.2);-webkit-text-stroke:0.15px #000;">Terminal</div>
<div class="li" style="left:251.6px;top:302.8px;font-family:'Liberation Serif';font-size:16px;transform:scaleX(1.038);">Times New Roman</div>
<div class="li" style="left:251.6px;top:326.1px;font-family:'Liberation Sans';font-size:16px;font-weight:bold;transform:scaleX(0.961);">Trebuchet MS</div>
<div class="li" style="left:251.5px;top:348.0px;font-family:'Liberation Sans';font-size:16px;transform:scaleX(0.901);">Tw Cen MT</div>
<div class="li" style="left:251.5px;top:369.3px;font-family:'Liberation Sans';font-size:15px;transform:scaleX(0.702);">Tw Cen MT Condensed</div>
<div class="li" style="left:251.5px;top:391.2px;font-family:'Liberation Sans';font-size:16px;font-weight:bold;transform:scaleX(0.809);">Tw Cen MT Condensed Extra Bold</div>
<div class="li" style="left:251.4px;top:413.5px;font-family:'Liberation Sans';font-size:16.5px;transform:scaleX(1.142);">Verdana</div>
<div class="li" style="left:250.2px;top:434.2px;font-family:'Liberation Serif';font-size:16px;font-style:italic;transform:scaleX(1.2);">Viner Hand ITC</div>
<div class="li" style="left:251.7px;top:456.8px;font-family:'Liberation Serif';font-size:15px;font-style:italic;transform:scaleX(1.142);color:#444;">Vivaldi</div>
<div class="li" style="left:251.8px;top:479.2px;font-family:'Liberation Serif';font-size:16px;font-style:italic;transform:scaleX(0.953);color:#444;">Vladimir Script</div>
<div class="li" style="left:251.5px;top:502px;font-family:'Liberation Sans';font-size:16px;transform:scaleX(1.018);">Webdings</div>
<div class="li" style="left:250px;top:522.3px;font-family:'Liberation Serif';font-size:15px;font-weight:bold;transform:scale(2.215,1.08);-webkit-text-stroke:0.35px #000;">Wide Latin</div>
<div class="li" style="left:251.5px;top:543.8px;font-family:'Liberation Sans';font-size:16.5px;transform:scaleX(0.992);">Wingdings</div>
<div class="li" style="left:490.1px;top:171.3px;font-family:'Liberation Serif';font-size:16px;transform:scaleX(1.2);color:#fff;">A&beta;&chi;</div>
<svg class="a" style="left:0;top:0" width="771" height="599">
<g fill="#000">
<rect x="252" y="239" width="9" height="2.5"/><rect x="254.8" y="239" width="3.4" height="10"/>
<rect x="261.5" y="241.5" width="11" height="7.5"/>
<rect x="264.5" y="243" width="1" height="4.5" fill="#bbb"/><rect x="268.5" y="243" width="1" height="4.5" fill="#ddd"/>
<rect x="273.5" y="241.5" width="7.5" height="7.5" rx="1.5"/>
<rect x="276" y="245" width="2" height="2" fill="#888"/>
<path d="M284.5 249V244.5H293.5V249H291.5V246.5H290V249H288V246.5H286.5V249Z" fill="#222"/>
<path d="M298.5 240H300.5L302 246L303.5 240H305.5L303 249H301Z"/>
<path d="M306.5 244L308.5 244L307 249H306Z"/>
<rect x="314.5" y="241.5" width="9.5" height="7.5"/><rect x="317.5" y="243" width="1" height="4.5" fill="#ccc"/>
<path d="M329 244H330.5L331.5 247.5L332.5 244H333.5L334.5 247.5L335.5 244H336.5L335 249H334L333 246L332 249H331Z" fill="#333"/>
<rect x="338.5" y="241.5" width="10" height="7.5"/><rect x="342" y="243" width="1" height="4.5" fill="#ccc"/>
<rect x="353.5" y="243" width="2" height="5"/><rect x="353.5" y="243" width="3.5" height="1.5"/>
</g>
<text x="362" y="255" font-family="Liberation Sans" font-size="11.5" fill="#111">12</text>
<!-- webdings icons -->
<g>
<rect x="472" y="501" width="12" height="2.5" fill="#000"/>
<rect x="474" y="501.8" width="8" height="0.8" fill="#fff"/>
<rect x="473" y="503.5" width="3" height="10" fill="#000"/>
<rect x="473.8" y="505" width="1.4" height="7" fill="#ddd"/>
<path d="M478 504.5Q479 503.5 480 504.5" fill="none" stroke="#000" stroke-width="0.8"/>
<path d="M480 507H488M480 509H488" stroke="#000" stroke-width="0.8"/>
<rect x="471" y="510" width="17" height="8" fill="#000"/>
<rect x="473.5" y="511" width="2" height="4" fill="#fff"/>
<circle cx="493" cy="512" r="2.3" fill="none" stroke="#000" stroke-width="0.9"/>
<circle cx="500" cy="512" r="2.3" fill="none" stroke="#000" stroke-width="0.9"/>
<path d="M493 512L495.5 507.5H499L500 512M495.5 507.5L497 512L499 507.5M494.5 506.5H496.5" fill="none" stroke="#000" stroke-width="0.8"/>
<rect x="505" y="501.5" width="16.5" height="16.5" fill="#fff" stroke="#200020" stroke-width="1"/>
</g>
<!-- wingdings zodiac -->
<g fill="none" stroke="#000" stroke-width="1">
<path d="M482.5 547Q484.5 549 486 548M486 548Q487.5 549 489 547M485.5 548.5A2.8 2.8 0 1 0 485.6 548.5Z"/>
<circle cx="485.5" cy="556.5" r="3.3"/>
<path d="M482.5 549Q486 551 488.5 549" />
<path d="M493.5 556A2.6 2.6 0 1 1 496.5 558.5L495 551Q494.5 546 498.5 546Q502.5 546 501.5 551L499.5 558Q499 561.5 502 560.5" stroke-width="1.3"/>
<path d="M506 548.5Q507.5 547 508.5 549V558M508.5 549.5Q510 547 511.5 549V558M511.5 549.5Q513 547 514.5 549V556Q515.5 561 518 560M514.5 554Q517.5 550 520 553Q521 557 516.5 559" stroke-width="1.2"/>
</g>
</svg>
<!-- LIST -->

</body></html>
